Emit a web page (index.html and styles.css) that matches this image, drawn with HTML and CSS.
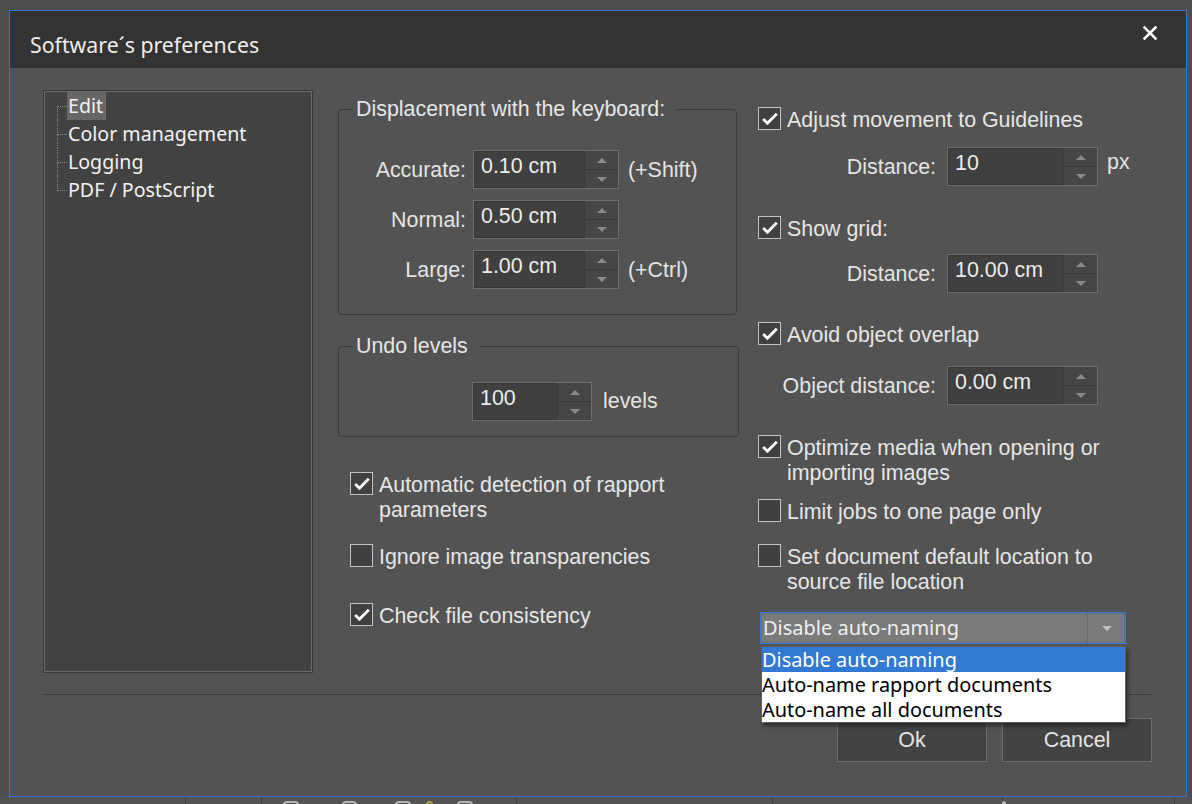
FILE: index.html
```html
<!DOCTYPE html>
<html lang="en">
<head>
<meta charset="utf-8">
<title>Software´s preferences</title>
<link rel="stylesheet" href="styles.css">
</head>
<body>
<div class="dialog">
  <div class="titlebar">
    <div class="title">Software´s preferences</div>
    <svg class="close" width="16" height="16" viewBox="0 0 16 16"><path d="M2.6 2.6 L13.4 13.4 M13.4 2.6 L2.6 13.4" stroke="#ffffff" stroke-width="2.6" stroke-linecap="square" fill="none"/></svg>
  </div>

  <div class="main">
    <div class="tree">
      <div class="node first"><span class="conn"><i></i><i></i></span><span class="label sel">Edit</span></div>
      <div class="node"><span class="conn"><i></i><i></i></span><span class="label">Color management</span></div>
      <div class="node"><span class="conn"><i></i><i></i></span><span class="label">Logging</span></div>
      <div class="node last"><span class="conn"><i></i><i></i></span><span class="label">PDF / PostScript</span></div>
    </div>

    <div class="col-mid">
      <fieldset class="group g1">
        <legend>Displacement with the keyboard:</legend>
        <div class="spin-grid">
          <label>Accurate:</label>
          <div class="spin"><span class="val">0.10 cm</span><span class="arrows"><i class="up"></i><i class="down"></i></span></div>
          <span class="suffix">(+Shift)</span>

          <label>Normal:</label>
          <div class="spin"><span class="val">0.50 cm</span><span class="arrows"><i class="up"></i><i class="down"></i></span></div>
          <span class="suffix"></span>

          <label>Large:</label>
          <div class="spin"><span class="val">1.00 cm</span><span class="arrows"><i class="up"></i><i class="down"></i></span></div>
          <span class="suffix">(+Ctrl)</span>
        </div>
      </fieldset>

      <fieldset class="group g2">
        <legend>Undo levels</legend>
        <div class="undo-row">
          <div class="spin w120"><span class="val">100</span><span class="arrows"><i class="up"></i><i class="down"></i></span></div>
          <span class="levels">levels</span>
        </div>
      </fieldset>

      <div class="check cb-l1">
        <span class="box on"><svg width="21" height="21" viewBox="0 0 21 21"><path d="M4.2 11 L8.4 15.2 L17.8 5.8" stroke="#ffffff" stroke-width="2.8" fill="none"/></svg></span>
        <span class="txt">Automatic detection of rapport parameters</span>
      </div>
      <div class="check cb-l2">
        <span class="box"></span>
        <span class="txt">Ignore image transparencies</span>
      </div>
      <div class="check cb-l3">
        <span class="box on"><svg width="21" height="21" viewBox="0 0 21 21"><path d="M4.2 11 L8.4 15.2 L17.8 5.8" stroke="#ffffff" stroke-width="2.8" fill="none"/></svg></span>
        <span class="txt">Check file consistency</span>
      </div>
    </div>

    <div class="col-right">
      <div class="check cb-r1">
        <span class="box on"><svg width="21" height="21" viewBox="0 0 21 21"><path d="M4.2 11 L8.4 15.2 L17.8 5.8" stroke="#ffffff" stroke-width="2.8" fill="none"/></svg></span>
        <span class="txt">Adjust movement to Guidelines</span>
      </div>
      <div class="frow fr1">
        <label>Distance:</label>
        <div class="spin w151"><span class="val">10</span><span class="arrows"><i class="up"></i><i class="down"></i></span></div>
        <span class="px">px</span>
      </div>
      <div class="check cb-r2">
        <span class="box on"><svg width="21" height="21" viewBox="0 0 21 21"><path d="M4.2 11 L8.4 15.2 L17.8 5.8" stroke="#ffffff" stroke-width="2.8" fill="none"/></svg></span>
        <span class="txt">Show grid:</span>
      </div>
      <div class="frow fr2">
        <label>Distance:</label>
        <div class="spin w151"><span class="val">10.00 cm</span><span class="arrows"><i class="up"></i><i class="down"></i></span></div>
      </div>
      <div class="check cb-r3">
        <span class="box on"><svg width="21" height="21" viewBox="0 0 21 21"><path d="M4.2 11 L8.4 15.2 L17.8 5.8" stroke="#ffffff" stroke-width="2.8" fill="none"/></svg></span>
        <span class="txt">Avoid object overlap</span>
      </div>
      <div class="frow fr3">
        <label>Object distance:</label>
        <div class="spin w151"><span class="val">0.00 cm</span><span class="arrows"><i class="up"></i><i class="down"></i></span></div>
      </div>
      <div class="check cb-r4">
        <span class="box on"><svg width="21" height="21" viewBox="0 0 21 21"><path d="M4.2 11 L8.4 15.2 L17.8 5.8" stroke="#ffffff" stroke-width="2.8" fill="none"/></svg></span>
        <span class="txt">Optimize media when opening or importing images</span>
      </div>
      <div class="check cb-r5">
        <span class="box"></span>
        <span class="txt">Limit jobs to one page only</span>
      </div>
      <div class="check cb-r6">
        <span class="box"></span>
        <span class="txt">Set document default location to source file location</span>
      </div>
      <div class="combo-wrap">
        <div class="combo">
          <span class="combo-text">Disable auto-naming</span>
          <span class="combo-btn"></span>
        </div>
        <ul class="combo-list">
          <li class="hi">Disable auto-naming</li>
          <li>Auto-name rapport documents</li>
          <li>Auto-name all documents</li>
        </ul>
      </div>
    </div>
  </div>

  <div class="sep"></div>
  <div class="buttons">
    <button class="btn">Ok</button>
    <button class="btn">Cancel</button>
  </div>
</div>
<div class="taskbar">
  <span class="seg s1"></span>
  <span class="seg s2"></span>
  <span class="seg s3"><i class="ic"></i><i class="ic"></i><i class="ic"></i><i class="ic star"></i><i class="ic"></i></span>
  <span class="seg s4"></span>
  <span class="seg s5"><i class="ic"></i></span>
  <span class="seg s6"></span>
</div>
</body>
</html>
```

FILE: styles.css
```css
* { box-sizing: border-box; }
html, body { margin: 0; padding: 0; }
body {
  width: 1192px;
  height: 804px;
  overflow: hidden;
  background: #4e4e4e;
  font-family: "Liberation Sans", Arial, sans-serif;
  font-size: 21.4px;
  color: #e4e4e4;
}

.dialog {
  margin: 10px 0 0 9px;
  width: 1178px;
  height: 787px;
  border: 1px solid #2f78d2;
  background: #535353;
  display: flex;
  flex-direction: column;
}

.titlebar {
  flex: none;
  height: 57px;
  background: #333333;
  display: flex;
  justify-content: space-between;
  align-items: flex-start;
  padding: 0 28px 0 20px;
}
.title {
  font-family: "Noto Sans", "Open Sans", sans-serif;
  font-size: 21.3px;
  line-height: 28px;
  margin-top: 20px;
  color: #ededed;
}
.close { margin-top: 14px; display: block; }

.main {
  flex: none;
  display: flex;
  align-items: flex-start;
  padding: 22px 0 0 33px;
  height: 605px;
}

/* tree */
.tree {
  flex: none;
  width: 270px;
  height: 583px;
  background: #424242;
  border: 1px solid #383838;
  box-shadow: inset 0 0 0 1px #6a6a6a;
  padding: 1px 0 0 13px;
  font-family: "Noto Sans", "Open Sans", sans-serif;
  font-size: 19.6px;
  color: #f2f2f2;
}
.node { display: flex; height: 28px; line-height: 28px; }
.conn { flex: none; width: 10px; display: flex; flex-direction: column; }
.conn i { display: block; border-left: 1px dotted #8c8c8c; }
.conn i:first-child { height: 15px; border-bottom: 1px dotted #8c8c8c; }
.conn i:last-child { height: 13px; }
.node.first .conn i:first-child { border-left-color: transparent; }
.node.last .conn i:last-child { border-left-color: transparent; }
.label { padding: 0 3px 0 1px; white-space: nowrap; }
.label.sel { background: #676767; }

/* middle column */
.col-mid {
  flex: none;
  width: 401px;
  margin-left: 25px;
  display: flex;
  flex-direction: column;
  align-items: flex-start;
}
.group {
  margin: 0;
  border: 1px solid #3b3b3b;
  border-radius: 4px;
  min-width: 0;
}
.group legend {
  margin-left: 14px;
  padding: 0 11px 0 3px;
  line-height: 24px;
  color: #e6e6e6;
}
.g1 { width: 399px; margin-top: 7px; padding: 29px 0 25px 0; }
.g2 { width: 401px; margin-top: 19px; padding: 24px 0 15px 0; }

.spin-grid {
  display: grid;
  grid-template-columns: 127px 146px auto;
  column-gap: 7px;
  row-gap: 11px;
  align-items: center;
}
.spin-grid label { text-align: right; padding-top: 2px; }
.suffix { margin-left: 2px; padding-top: 1px; }

.spin {
  height: 39px;
  width: 146px;
  display: flex;
  background: #404040;
  border: 1px solid #6d6d6d;
  box-shadow: inset 0 0 0 1px #363636;
}
.spin.w120 { width: 120px; }
.spin.w151 { width: 151px; }
.spin .val {
  flex: 1;
  padding: 3px 0 0 7px;
  line-height: 25px;
  color: #ececec;
  white-space: nowrap;
}
.arrows {
  flex: none;
  width: 34px;
  display: flex;
  flex-direction: column;
  border-left: 1px solid #3a3a3a;
  background: #464646;
}
.arrows i {
  flex: 1;
  display: flex;
  align-items: center;
  justify-content: center;
}
.arrows i.up { border-bottom: 1px solid #3a3a3a; }
.arrows i::after {
  content: "";
  width: 0;
  height: 0;
  border-left: 5px solid transparent;
  border-right: 5px solid transparent;
}
.arrows i.up::after { border-bottom: 5px solid #8a8a8a; }
.arrows i.down::after { border-top: 5px solid #8a8a8a; }

.undo-row { display: flex; align-items: center; padding-left: 133px; }
.levels { margin: 0 0 0 11px; }

/* checkboxes */
.check { display: flex; align-items: flex-start; gap: 6px; }
.box {
  flex: none;
  width: 23px;
  height: 23px;
  border: 1px solid #c2c2c2;
  background: #404040;
}
.box svg { display: block; }
.check .txt { margin: 1px 0 -2px 0; line-height: 25px; color: #e6e6e6; }

.cb-l1 { margin: 35px 0 0 12px; }
.cb-l2 { margin: 23px 0 0 12px; }
.cb-l3 { margin: 35px 0 0 12px; }

/* right column */
.col-right {
  flex: none;
  width: 368px;
  margin-left: 19px;
  display: flex;
  flex-direction: column;
  align-items: flex-start;
}
.frow { display: flex; align-items: center; }
.frow label { width: 178px; margin-right: 11px; padding-top: 2px; text-align: right; white-space: nowrap; }
.px { align-self: flex-start; margin: 3px 0 0 9px; line-height: 25px; }

.cb-r1 { margin-top: 17px; }
.fr1 { margin-top: 16px; }
.cb-r2 { margin-top: 30px; }
.fr2 { margin-top: 14px; }
.cb-r3 { margin-top: 29px; }
.fr3 { margin-top: 20px; }
.cb-r4 { margin-top: 30px; }
.cb-r5 { margin-top: 15px; }
.cb-r6 { margin-top: 21px; }

/* combo */
.combo-wrap { position: relative; margin: 19px 0 0 2px; width: 366px; }
.combo {
  height: 32px;
  display: flex;
  border: 1px solid #3a7bd5;
  background: #7a7a7a;
  box-shadow: inset 0 0 0 1px #5b6d85;
  font-family: "Noto Sans", "Open Sans", sans-serif;
  font-size: 20px;
  color: #f0f0f0;
}
.combo-text { flex: 1; padding-left: 2px; line-height: 30px; white-space: nowrap; }
.combo-btn {
  flex: none;
  width: 38px;
  border-left: 1px solid #6a6a6a;
  display: flex;
  align-items: center;
  justify-content: center;
}
.combo-btn::after {
  content: "";
  width: 0;
  height: 0;
  border-left: 5px solid transparent;
  border-right: 5px solid transparent;
  border-top: 5px solid #c2c2c2;
}
.combo-list {
  position: absolute;
  top: 34px;
  left: 1px;
  width: 365px;
  margin: 0;
  padding: 0;
  list-style: none;
  background: #ffffff;
  border: 1px solid #5e5e5e;
  box-shadow: 2px 3px 4px rgba(0, 0, 0, 0.45);
  font-family: "Noto Sans", "Open Sans", sans-serif;
  font-size: 19.9px;
  color: #000000;
  z-index: 5;
}
.combo-list li { height: 25px; line-height: 25px; white-space: nowrap; }
.combo-list li.hi { background: #3279d3; color: #ffffff; }

/* footer */
.sep { flex: none; margin: 21px 35px 0 33px; height: 1px; background: #3c3c3c; }
.buttons {
  flex: none;
  display: flex;
  justify-content: flex-end;
  gap: 15px;
  margin-top: 23px;
  padding-right: 34px;
}
.btn {
  width: 150px;
  height: 44px;
  margin: 0;
  padding: 0;
  background: #434343;
  border: 1px solid #6b6b6b;
  font-family: "Liberation Sans", Arial, sans-serif;
  font-size: 21.4px;
  color: #e4e4e4;
}

/* background app strip */
.taskbar { display: flex; height: 7px; background: #535353; }
.seg { flex: none; height: 7px; border-right: 1px solid #3e3e3e; display: flex; }
.s1 { width: 186px; }
.s2 { width: 76px; }
.s3 { width: 255px; padding-left: 21px; }
.s4 { width: 256px; }
.s5 { width: 196px; padding-left: 229px; }
.s6 { width: 172px; }
.ic {
  display: block;
  width: 17px;
  height: 10px;
  margin: 4px 43px 0 0;
  border: 2px solid #b4b4b4;
  border-radius: 4px;
}
.s3 .ic:nth-child(2) { margin-right: 38px; }
.s3 .ic:nth-child(3) { margin-right: 15px; }
.ic.star { width: 8px; border-color: #b8a040; margin-right: 24px; }
```
